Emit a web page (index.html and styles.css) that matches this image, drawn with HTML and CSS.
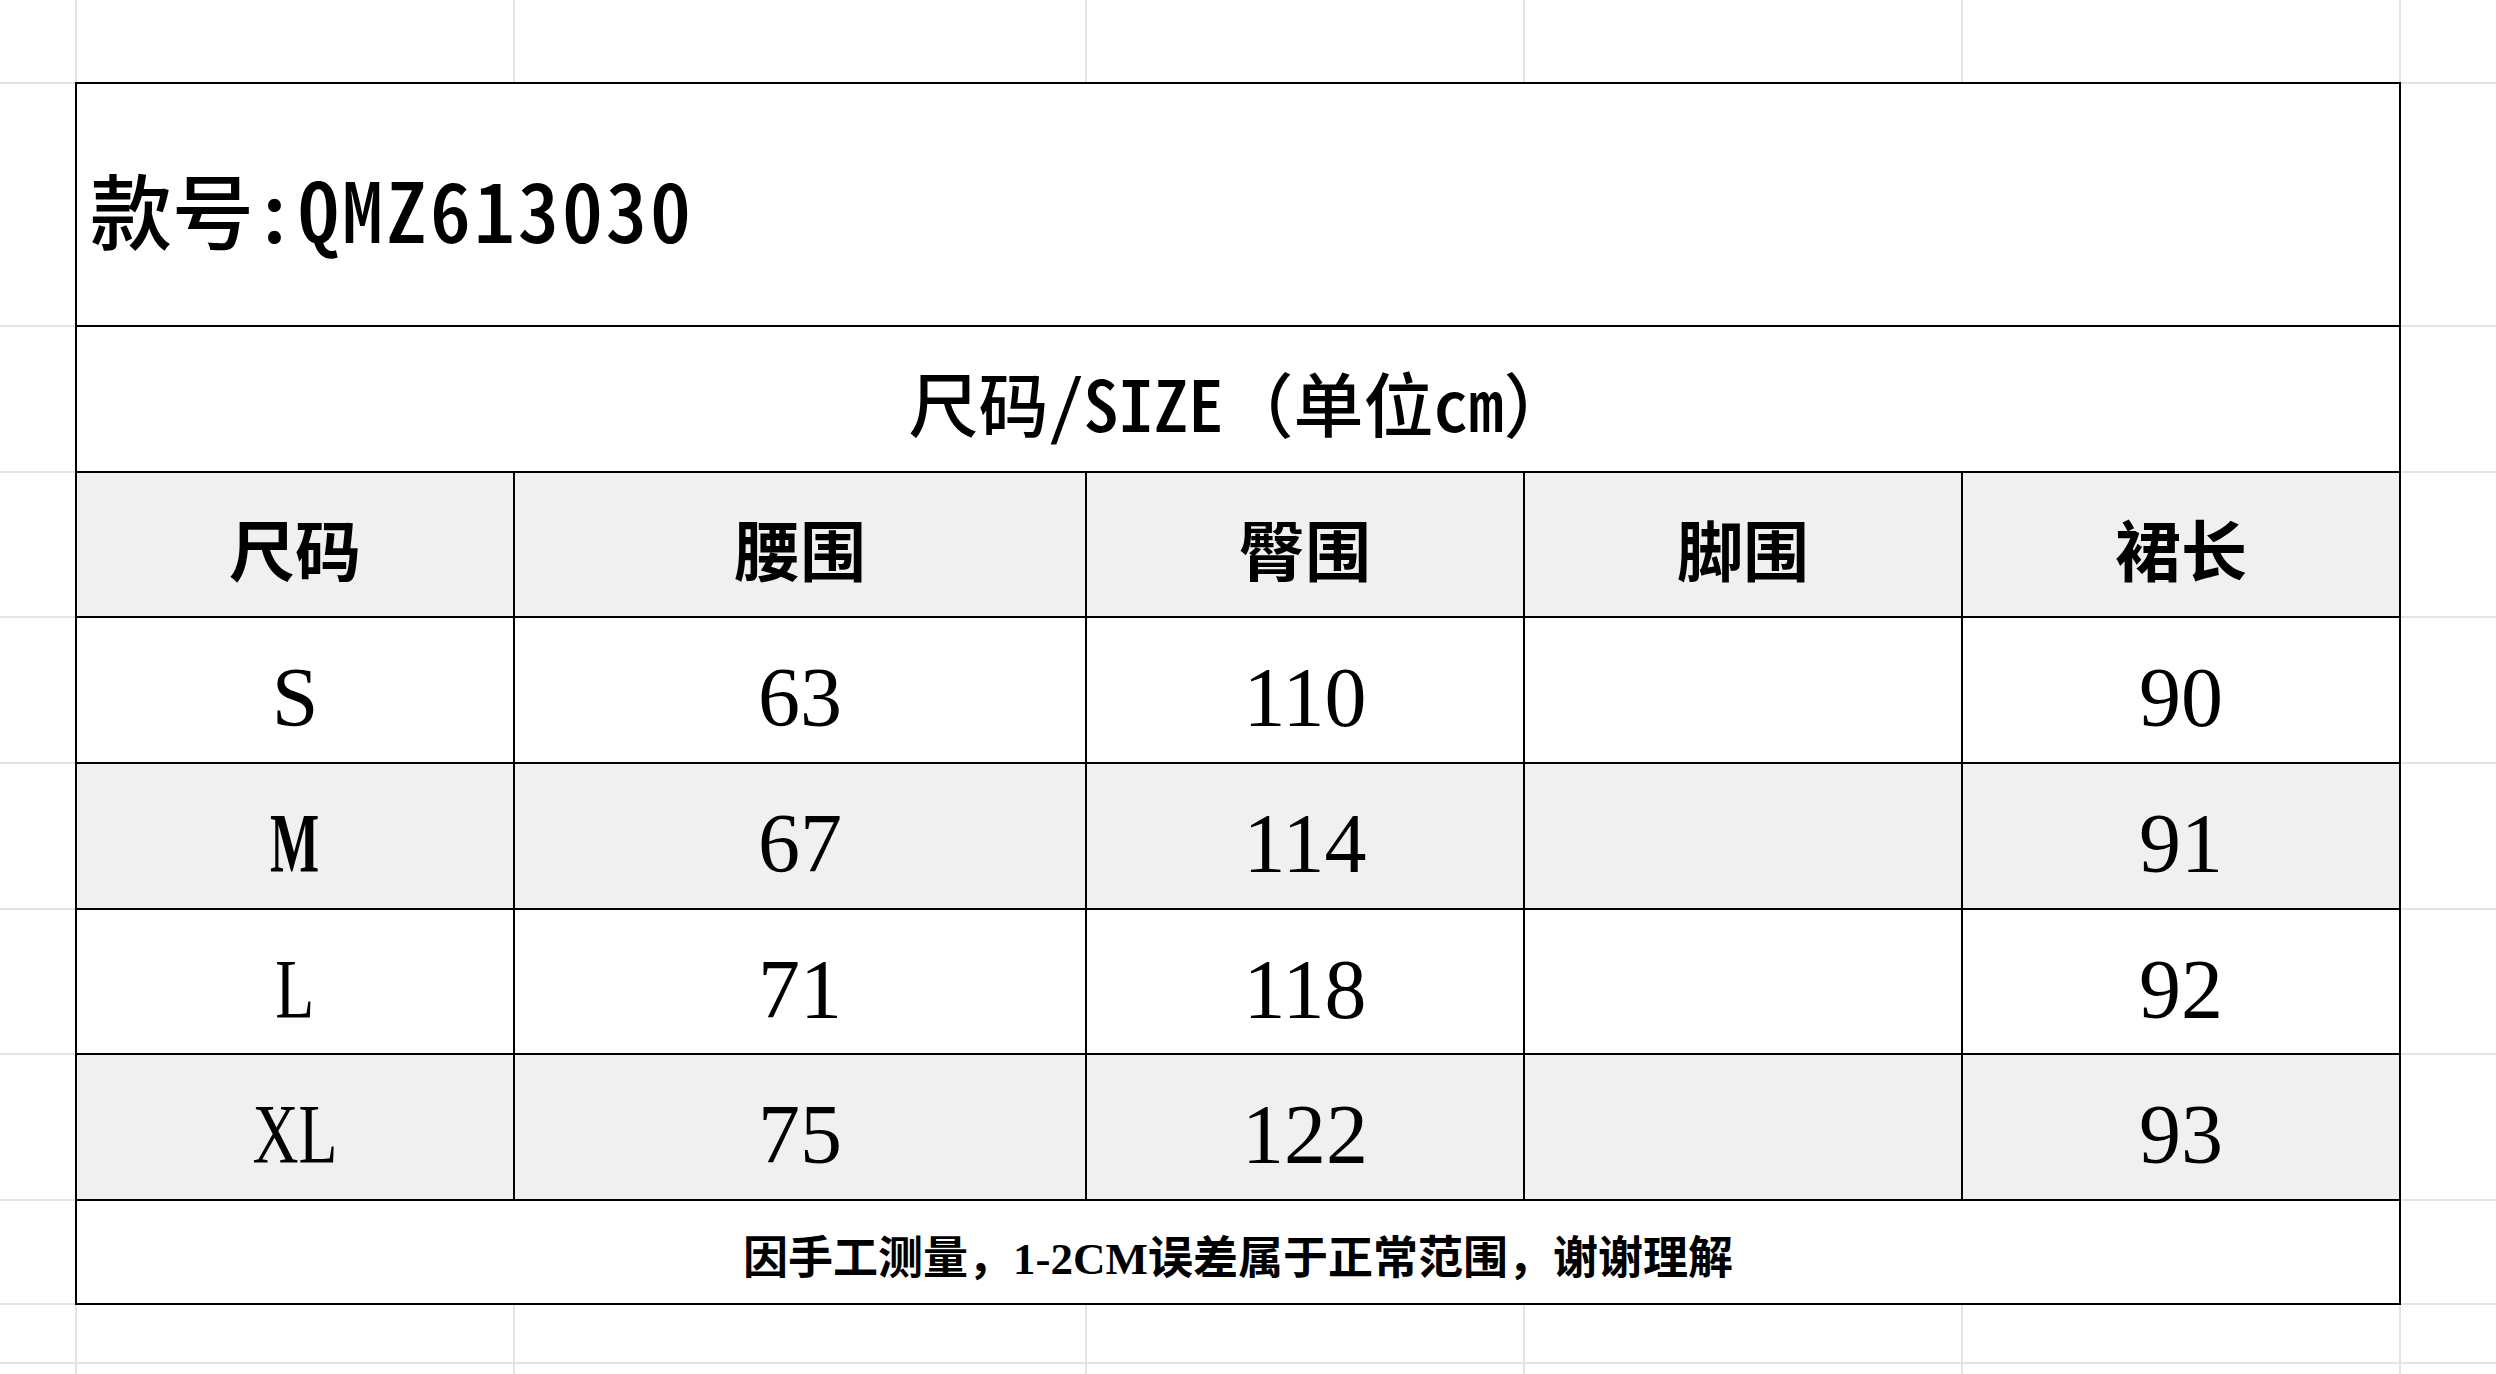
FILE: index.html
```html
<!DOCTYPE html>
<html lang="zh-CN">
<head>
<meta charset="utf-8">
<title>QMZ613030 尺码表</title>
<link rel="stylesheet" href="styles.css">
</head>
<body>
<div class="sheet">
  <div class="size-table">
    <div class="cell title">款号<span class="hw">:QMZ613030</span></div>
    <div class="cell subtitle">尺码<span class="hw">/SIZE</span>（单位<span class="hw">cm</span>）</div>

    <div class="cell head">尺码</div>
    <div class="cell head">腰围</div>
    <div class="cell head">臀围</div>
    <div class="cell head">脚围</div>
    <div class="cell head">裙长</div>

    <div class="cell data"><span class="lbl">S</span></div>
    <div class="cell data">63</div>
    <div class="cell data">110</div>
    <div class="cell data"></div>
    <div class="cell data">90</div>

    <div class="cell data alt"><span class="lbl lbl-m">M</span></div>
    <div class="cell data alt">67</div>
    <div class="cell data alt">114</div>
    <div class="cell data alt"></div>
    <div class="cell data alt">91</div>

    <div class="cell data"><span class="lbl lbl-n">L</span></div>
    <div class="cell data">71</div>
    <div class="cell data">118</div>
    <div class="cell data"></div>
    <div class="cell data">92</div>

    <div class="cell data alt"><span class="lbl lbl-n">XL</span></div>
    <div class="cell data alt">75</div>
    <div class="cell data alt">122</div>
    <div class="cell data alt"></div>
    <div class="cell data alt">93</div>

    <div class="cell note">因手工测量，1-2CM误差属于正常范围，谢谢理解</div>
  </div>
</div>
</body>
</html>
```
FILE: styles.css
```css
html, body {
  margin: 0;
  padding: 0;
  background: #fff;
}

.sheet {
  --g: linear-gradient(#e4e4e4, #e4e4e4);
  width: 2496px;
  height: 1374px;
  box-sizing: border-box;
  padding: 82px 0 0 75px;
  overflow: hidden;
  background-color: #fff;
  background-repeat: no-repeat;
  background-image:
    var(--g), var(--g), var(--g), var(--g), var(--g), var(--g),
    var(--g), var(--g), var(--g), var(--g), var(--g), var(--g),
    var(--g), var(--g), var(--g), var(--g);
  background-size:
    2px 100%, 2px 100%, 2px 100%, 2px 100%, 2px 100%, 2px 100%,
    100% 2px, 100% 2px, 100% 2px, 100% 2px, 100% 2px,
    100% 2px, 100% 2px, 100% 2px, 100% 2px, 100% 2px;
  background-position:
    75px 0, 513px 0, 1085px 0, 1523px 0, 1961px 0, 2399px 0,
    0 82px, 0 325px, 0 471px, 0 616px, 0 762px,
    0 908px, 0 1053px, 0 1199px, 0 1303px, 0 1362px;
}

.size-table {
  display: grid;
  width: max-content;
  grid-template-columns: 436px 570px 436px 436px 436px;
  grid-template-rows: 241px 144px 143px 144px 144px 143px 144px 102px;
  gap: 2px;
  padding: 2px;
  background: #000;
}

.cell {
  display: flex;
  align-items: center;
  justify-content: center;
  box-sizing: border-box;
  background: #fff;
  color: #000;
  white-space: nowrap;
}

.hw {
  font-feature-settings: "hwid";
}

.title {
  grid-column: 1 / -1;
  justify-content: flex-start;
  padding: 5px 0 0 13px;
  font-family: "Noto Sans CJK SC", sans-serif;
  font-weight: 500;
  font-size: 82px;
}

.title .hw {
  letter-spacing: 3px;
}

.subtitle {
  grid-column: 1 / -1;
  padding: 4px 0 0 6px;
  font-family: "Noto Sans CJK SC", sans-serif;
  font-weight: 500;
  font-size: 70px;
}

.head {
  background: #f0f0f0;
  padding-top: 5px;
  font-family: "Noto Sans CJK SC", sans-serif;
  font-weight: 700;
  font-size: 66px;
}

.data {
  padding-top: 15px;
  font-family: "Liberation Serif", "Noto Sans CJK SC", serif;
  font-size: 84px;
}

.alt {
  background: #f0f0f0;
}

.lbl {
  display: inline-block;
}

.lbl-m {
  transform: scaleX(0.62);
  font-weight: 700;
}

.lbl-n {
  transform: scaleX(0.76);
}

.note {
  grid-column: 1 / -1;
  padding-top: 5px;
  font-family: "Liberation Serif", "Noto Sans CJK SC", serif;
  font-weight: 700;
  font-size: 45px;
}
```
